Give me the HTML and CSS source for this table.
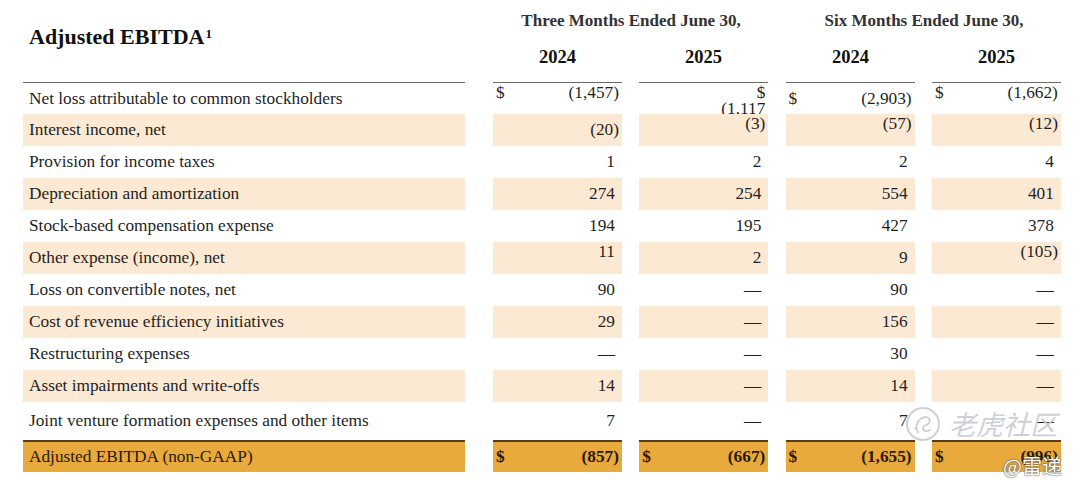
FILE: index.html
```html
<!DOCTYPE html>
<html>
<head>
<meta charset="utf-8">
<link rel="stylesheet" href="styles.css">
</head>
<body>
<div class="sheet">
  <div class="head">
    <div class="title">Adjusted EBITDA<span class="sup">1</span></div>
    <div class="periods">
      <div class="period">
        <div class="ptitle">Three Months Ended June 30,</div>
        <div class="years"><span>2024</span><span>2025</span></div>
      </div>
      <div class="period">
        <div class="ptitle">Six Months Ended June 30,</div>
        <div class="years"><span>2024</span><span>2025</span></div>
      </div>
    </div>
  </div>

  <div class="row first">
    <div class="label">Net loss attributable to common stockholders</div>
    <div class="vals">
      <div class="cell dollar top"><span>$</span><span>(1,457)</span></div>
      <div class="cell stack"><span>$</span><span>(1,117</span></div>
      <div class="cell dollar low"><span>$</span><span>(2,903)</span></div>
      <div class="cell dollar top"><span>$</span><span>(1,662)</span></div>
    </div>
  </div>

  <div class="row hl">
    <div class="label">Interest income, net</div>
    <div class="vals">
      <div class="cell">(20)</div>
      <div class="cell top">(3)</div>
      <div class="cell top">(57)</div>
      <div class="cell top">(12)</div>
    </div>
  </div>

  <div class="row">
    <div class="label">Provision for income taxes</div>
    <div class="vals">
      <div class="cell pos">1</div>
      <div class="cell pos">2</div>
      <div class="cell pos">2</div>
      <div class="cell pos">4</div>
    </div>
  </div>

  <div class="row hl">
    <div class="label">Depreciation and amortization</div>
    <div class="vals">
      <div class="cell pos">274</div>
      <div class="cell pos">254</div>
      <div class="cell pos">554</div>
      <div class="cell pos">401</div>
    </div>
  </div>

  <div class="row">
    <div class="label">Stock-based compensation expense</div>
    <div class="vals">
      <div class="cell pos">194</div>
      <div class="cell pos">195</div>
      <div class="cell pos">427</div>
      <div class="cell pos">378</div>
    </div>
  </div>

  <div class="row hl">
    <div class="label">Other expense (income), net</div>
    <div class="vals">
      <div class="cell pos top">11</div>
      <div class="cell pos">2</div>
      <div class="cell pos">9</div>
      <div class="cell top">(105)</div>
    </div>
  </div>

  <div class="row">
    <div class="label">Loss on convertible notes, net</div>
    <div class="vals">
      <div class="cell pos">90</div>
      <div class="cell pos">—</div>
      <div class="cell pos">90</div>
      <div class="cell pos">—</div>
    </div>
  </div>

  <div class="row hl">
    <div class="label">Cost of revenue efficiency initiatives</div>
    <div class="vals">
      <div class="cell pos">29</div>
      <div class="cell pos">—</div>
      <div class="cell pos">156</div>
      <div class="cell pos">—</div>
    </div>
  </div>

  <div class="row">
    <div class="label">Restructuring expenses</div>
    <div class="vals">
      <div class="cell pos">—</div>
      <div class="cell pos">—</div>
      <div class="cell pos">30</div>
      <div class="cell pos">—</div>
    </div>
  </div>

  <div class="row hl">
    <div class="label">Asset impairments and write-offs</div>
    <div class="vals">
      <div class="cell pos">14</div>
      <div class="cell pos">—</div>
      <div class="cell pos">14</div>
      <div class="cell pos">—</div>
    </div>
  </div>

  <div class="row tall">
    <div class="label">Joint venture formation expenses and other items</div>
    <div class="vals">
      <div class="cell pos">7</div>
      <div class="cell pos">—</div>
      <div class="cell pos">7</div>
      <div class="cell pos">—</div>
    </div>
  </div>

  <div class="row total">
    <div class="label">Adjusted EBITDA (non-GAAP)</div>
    <div class="vals">
      <div class="cell dollar"><span>$</span><span>(857)</span></div>
      <div class="cell dollar"><span>$</span><span>(667)</span></div>
      <div class="cell dollar"><span>$</span><span>(1,655)</span></div>
      <div class="cell dollar"><span>$</span><span>(996)</span></div>
    </div>
  </div>

  <div class="watermark">
    <svg class="wm-logo" width="36" height="36" viewBox="0 0 36 36">
      <circle cx="18" cy="18" r="16" fill="none" stroke="#c9ccd3" stroke-width="2"/>
      <path d="M12 24 C10 18 14 12 20 11 C24 11 26 14 24 17 C22 20 18 19 18 22 C18 25 22 26 25 24" fill="none" stroke="#c9ccd3" stroke-width="2" stroke-linecap="round"/>
      <circle cx="13" cy="26" r="1.3" fill="#c9ccd3"/>
      <circle cx="10.5" cy="22.5" r="1.3" fill="#c9ccd3"/>
    </svg>
    <span class="wm-text">老虎社区</span>
  </div>
  <div class="author">@雷递</div>
</div>
</body>
</html>
```

FILE: styles.css
```css
html, body {
  margin: 0;
  padding: 0;
  background: #ffffff;
}

.sheet {
  position: relative;
  width: 1080px;
  height: 490px;
  padding-left: 23px;
  box-sizing: border-box;
  font-family: "Liberation Serif", "Times New Roman", serif;
  color: #1f1f1f;
}

.head {
  display: flex;
  height: 82px;
}

.title {
  width: 442px;
  padding: 24px 0 0 6px;
  box-sizing: border-box;
  font-size: 22px;
  font-weight: bold;
  color: #111;
}

.sup {
  font-size: 13px;
  vertical-align: 6px;
  margin-left: 1px;
}

.periods {
  display: flex;
  margin-left: 28px;
  gap: 17px;
}

.period {
  width: 276px;
  display: flex;
  flex-direction: column;
}

.ptitle {
  padding-top: 11px;
  text-align: center;
  font-size: 17px;
  font-weight: bold;
  color: #333;
  height: 26px;
}

.years {
  display: flex;
  gap: 17px;
  margin-top: 10px;
}

.years span {
  width: 129px;
  text-align: center;
  font-size: 18.5px;
  font-weight: bold;
  color: #111;
}

.row {
  display: flex;
  height: 32px;
  font-size: 17.3px;
}

.row.tall {
  height: 38px;
}

.label {
  width: 442px;
  padding-left: 6px;
  box-sizing: border-box;
  display: flex;
  align-items: center;
}

.vals {
  display: flex;
  margin-left: 28px;
  gap: 17.3px;
}

.cell {
  width: 129px;
  box-sizing: border-box;
  padding-right: 3px;
  display: flex;
  align-items: center;
  justify-content: flex-end;
  white-space: nowrap;
}

.cell.pos {
  padding-right: 7px;
}

.cell.top {
  align-items: flex-start;
  padding-top: 0;
}

.cell.low {
  align-items: flex-end;
  padding-bottom: 5px;
}

.cell.dollar {
  justify-content: space-between;
  padding-left: 3px;
}

.cell.stack {
  flex-direction: column;
  align-items: flex-end;
  justify-content: flex-start;
  line-height: 16px;
  padding-top: 2px;
  overflow: hidden;
}

.row.first .label,
.row.first .cell {
  border-top: 1px solid #6a6a6a;
}

.row.hl .label,
.row.hl .cell {
  background: #fce9d3;
}

.row.total .label,
.row.total .cell {
  background: #e8aa3c;
  border-top: 2px solid #5a3b1c;
}

.row.total .cell {
  font-weight: bold;
  color: #2a1a08;
}

.row.total .label {
  color: #2a1a08;
}

.watermark {
  position: absolute;
  left: 905px;
  top: 404px;
  display: flex;
  align-items: center;
  gap: 8px;
  opacity: 0.9;
}

.wm-text {
  font-family: "Noto Sans CJK SC", sans-serif;
  font-size: 27px;
  font-style: italic;
  color: #c9ccd3;
  letter-spacing: 0;
}

.author {
  position: absolute;
  left: 1003px;
  top: 451px;
  font-family: "Noto Sans CJK SC", sans-serif;
  font-size: 20px;
  color: #ffffff;
  text-shadow: 0 0 2px #555, 0 0 1px #333;
}
```
